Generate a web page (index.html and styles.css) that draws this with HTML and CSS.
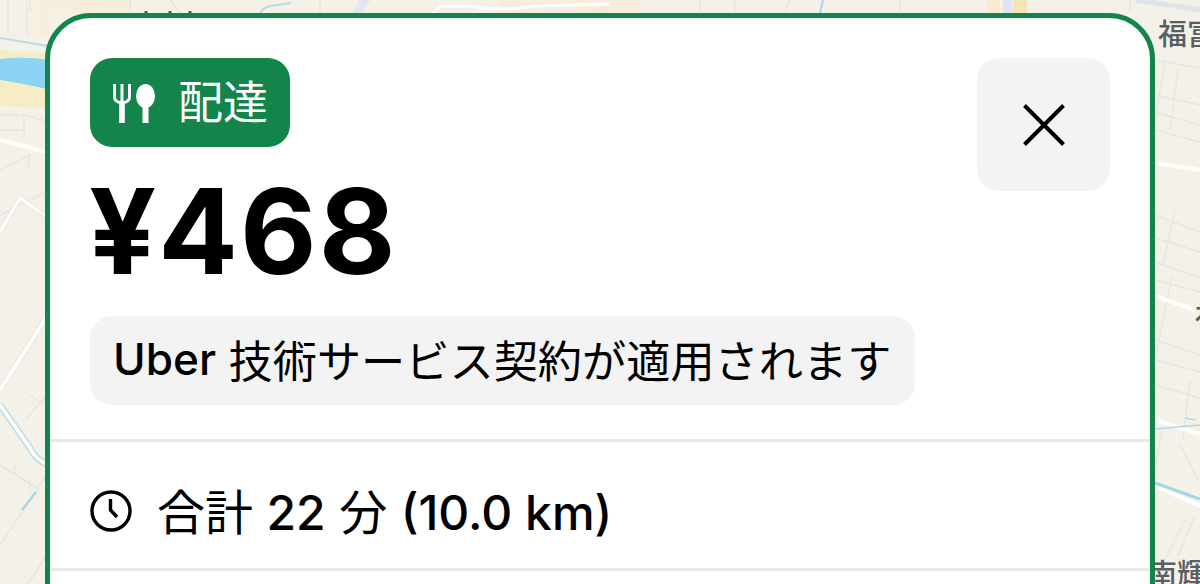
FILE: index.html
```html
<!DOCTYPE html>
<html lang="ja">
<head>
<meta charset="utf-8">
<title>配達</title>
<link rel="stylesheet" href="styles.css">
</head>
<body>
<div class="map">
  <svg class="map-art" viewBox="0 0 1200 584" width="1200" height="584" aria-hidden="true">
    <rect width="1200" height="584" fill="#f4f1e8"/>
    <path d="M0 0 H640 V14 H0Z" fill="#f6f1e6"/>
    <path d="M34 0 H50 V36 H34Z M50 0 H130 V14 H50Z" fill="#f8eedc"/>
    <path d="M500 0 H640 V14 H500Z" fill="#f8ecdc"/>
    <path d="M0 50 L50 54 V60 H0Z" fill="#f6ecc6"/>
    <path d="M0 59 Q25 56 50 60 V90 Q25 84 0 80Z" fill="#8dd3f3"/>
    <path d="M0 80 Q25 84 50 90 V108 L0 106Z" fill="#f6ecc6"/>
    <g stroke="#e7e6e2" stroke-width="1.5" fill="none">
      <path d="M8 0 V36M27 0 V36M0 115 H24 V140M0 130 H22M24 115 L50 122M0 170 L30 155L28 168M0 215 L50 190"/>
      <path d="M0 465 L40 490M15 465 V475M30 480 V490M0 545 L50 470M28 584 L50 550M30 395 L45 405M25 420 L45 398"/>
      <path d="M1155 60 L1200 68M1155 95 L1200 105M1155 112 L1200 125M1155 130 L1200 142M1165 60 L1155 120M1178 70 L1170 130M1155 215 L1200 232M1155 238 L1200 252M1155 262 L1200 278M1155 280 L1200 292M1175 210 L1163 265"/>
      <path d="M1155 340 L1200 355M1155 360 L1200 372M1155 385 L1200 398M1172 275 L1155 360M1190 380 L1183 440M1185 520 L1165 560M1195 515 L1178 556M1162 430 L1155 470M1180 445 L1198 480"/>
      <path d="M30 0 V13M130 0 V13M170 0 L180 13M320 0 V13M600 0 V13M700 0 V13M735 0 V13M790 0 L785 13M900 0 V13M1130 0 V13"/>
    </g>
    <g fill="none">
      <path d="M0 140 L46 152" stroke="#fff" stroke-width="4"/>
      <path d="M0 232 L20 198 L46 216" stroke="#e6e5e1" stroke-width="5"/>
      <path d="M0 232 L20 198 L46 216" stroke="#fff" stroke-width="3"/>
      <path d="M46 318 L0 390" stroke="#e6e5e1" stroke-width="6"/>
      <path d="M46 318 L0 390" stroke="#fff" stroke-width="4"/>
      <path d="M0 405 L30 448 Q36 460 48 465" stroke="#bfdfe6" stroke-width="7"/>
      <path d="M0 405 L30 448 Q36 460 48 465" stroke="#fff" stroke-width="3.5"/>
      <path d="M22 510 L36 492" stroke="#a9d6e6" stroke-width="2.5"/>
      <path d="M0 38 L48 46" stroke="#bcd9e4" stroke-width="2"/>
      <path d="M260 13 Q265 5 278 5 L291 3" stroke="#b4dcec" stroke-width="2"/>
      <path d="M352 13 L359 0 H370 L363 13Z" fill="#e1e8f0"/>
      <path d="M433 13 L440 6 H470 Q500 12 536 6 L610 4" stroke="#fff" stroke-width="3"/>
      <path d="M823 0 L820 13" stroke="#a9d4e6" stroke-width="2"/>
      <rect x="987" y="0" width="13" height="13" fill="#f8ecd0"/>
      <rect x="1003" y="0" width="9" height="13" fill="#dfe5f0"/>
      <rect x="1013" y="0" width="14" height="13" fill="#f7e4b4"/>
      <path d="M1136 0 L1200 10" stroke="#dfe3ec" stroke-width="5"/>
      <path d="M1155 163 L1200 170" stroke="#fff" stroke-width="4"/>
      <path d="M1155 296 L1195 310" stroke="#fff" stroke-width="4"/>
      <path d="M1155 420 L1200 434" stroke="#fff" stroke-width="4"/>
      <path d="M1155 429 L1200 425M1185 418 L1196 420" stroke="#a9dcea" stroke-width="1.5"/>
      <path d="M1155 486 L1200 506" stroke="#fff" stroke-width="4"/>
      <path d="M1155 483 L1200 499" stroke="#9fd8e8" stroke-width="3"/>
      <path d="M146 13 V11M170 13 V11M190 13 V11" stroke="#555" stroke-width="3"/>
    </g>
  </svg>
  <span class="label label-a">福富</span>
  <span class="label label-b">福</span>
  <span class="label label-c">南輝</span>
</div>
<main class="card">
  <header class="top">
    <div class="top-main">
      <div class="badge">
        <svg class="badge-icon" viewBox="0 0 42 40" width="42" height="40" aria-hidden="true">
          <path d="M1.5 1 V14 Q1.5 19 9 20 Q16.5 19 16.5 14 V1 M9 1 V20" fill="none" stroke="#fff" stroke-width="3"/>
          <rect x="6.2" y="18" width="5.6" height="22" fill="#fff"/>
          <ellipse cx="32.5" cy="13" rx="9.5" ry="12" fill="#fff"/>
          <rect x="29.5" y="18" width="6" height="22" fill="#fff"/>
        </svg>
        <span>配達</span>
      </div>
      <div class="price">¥468</div>
      <div class="chip"><span class="latin">Uber</span>&nbsp;技術サービス契約が適用されます</div>
    </div>
    <button class="close" type="button" aria-label="閉じる">
      <svg viewBox="0 0 42 42" width="42" height="42" aria-hidden="true">
        <path d="M1.5 1.5 L40.5 40.5 M40.5 1.5 L1.5 40.5" stroke="#000" stroke-width="4" fill="none"/>
      </svg>
    </button>
  </header>
  <section class="row row-trip">
    <svg class="clock" viewBox="0 0 42 42" width="42" height="42" aria-hidden="true">
      <circle cx="21" cy="21" r="19" fill="none" stroke="#000" stroke-width="3.4"/>
      <path d="M20.5 9 V20 L27 27" fill="none" stroke="#000" stroke-width="3.4"/>
    </svg>
    <span class="trip">合計 <span class="latin">22</span> 分 <span class="latin">(10.0 km)</span></span>
  </section>
  <section class="row"></section>
</main>
</body>
</html>
```
FILE: styles.css
```css
* { box-sizing: border-box; }
html, body { margin: 0; height: 584px; overflow: hidden; }
body {
  position: relative;
  width: 1200px;
  padding: 13px 45px 0;
  font-family: Inter, "Noto Sans CJK JP", sans-serif;
  color: #000;
}
.map { position: absolute; inset: 0; }
.map-art { display: block; }
.label {
  position: absolute;
  font: 500 29px/1 "Noto Sans CJK JP", sans-serif;
  color: #5a5d61;
  white-space: nowrap;
}
.label-a { left: 1158px; top: 18px; }
.label-b { left: 1195px; top: 300px; }
.label-c { left: 1148px; top: 558px; }
.card {
  position: relative;
  width: 1110px;
  height: 640px;
  background: #fff;
  border: 5px solid #14854a;
  border-radius: 46px;
}
.top {
  display: flex;
  justify-content: space-between;
  align-items: flex-start;
  padding: 40px 40px 34px;
}
.top-main { display: flex; flex-direction: column; align-items: flex-start; }
.badge {
  display: flex;
  align-items: center;
  gap: 23px;
  height: 89px;
  padding: 0 22px 0 23px;
  border-radius: 22px;
  background: #14854a;
  color: #fff;
  font-size: 45px;
  line-height: 1;
}
.badge-icon { width: 42px; height: 40px; }
.price {
  margin-top: 20px;
  margin-left: -1px;
  font-size: 118px;
  font-weight: 700;
  line-height: 128px;
  letter-spacing: 2px;
}
.chip {
  margin-top: 21px;
  height: 89px;
  padding: 0 24px 4px 23px;
  display: flex;
  align-items: center;
  border-radius: 22px;
  background: #f3f3f3;
  font-size: 44.2px;
  white-space: nowrap;
}
.latin { font-weight: 500; }
.close {
  display: flex;
  align-items: center;
  justify-content: center;
  width: 133px;
  height: 133px;
  padding: 0;
  border: 0;
  border-radius: 22px;
  background: #f3f3f3;
}
.row {
  display: flex;
  align-items: center;
  gap: 25px;
  height: 129px;
  padding: 0 40px;
  border-top: 3px solid #e8e8e8;
  font-size: 48px;
}
.row-trip { padding-top: 12px; }
.trip { padding-bottom: 4px; }
.clock { flex: none; }
```
